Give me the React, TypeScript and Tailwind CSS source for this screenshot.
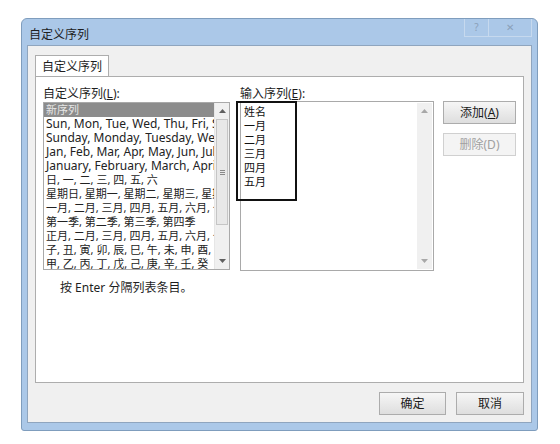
import React from "react";

const FONT = {
  fontFamily: '"Noto Sans", "Noto Sans CJK SC", sans-serif',
};

const leftItems = [
  "Sun, Mon, Tue, Wed, Thu, Fri, Sat",
  "Sunday, Monday, Tuesday, Wednesday, Thursday, Friday, Saturday",
  "Jan, Feb, Mar, Apr, May, Jun, Jul, Aug, Sep, Oct, Nov, Dec",
  "January, February, March, April, May, June, July, August",
  "日, 一, 二, 三, 四, 五, 六",
  "星期日, 星期一, 星期二, 星期三, 星期四, 星期五, 星期六",
  "一月, 二月, 三月, 四月, 五月, 六月, 七月, 八月, 九月",
  "第一季, 第二季, 第三季, 第四季",
  "正月, 二月, 三月, 四月, 五月, 六月, 七月, 八月, 九月",
  "子, 丑, 寅, 卯, 辰, 巳, 午, 未, 申, 酉, 戌, 亥",
  "甲, 乙, 丙, 丁, 戊, 己, 庚, 辛, 壬, 癸",
];

const rightItems = ["姓名", "一月", "二月", "三月", "四月", "五月"];

const isCjk = (t: string) => /[\u4e00-\u9fff]/.test(t);

const ArrowUp = ({ color = "#606060" }: { color?: string }) => (
  <svg width="7" height="4" viewBox="0 0 7 4">
    <path d="M0 4 L3.5 0 L7 4 Z" fill={color} />
  </svg>
);

const ArrowDown = ({ color = "#606060" }: { color?: string }) => (
  <svg width="7" height="4" viewBox="0 0 7 4">
    <path d="M0 0 L3.5 4 L7 0 Z" fill={color} />
  </svg>
);

const Button: React.FC<{ children: React.ReactNode; disabled?: boolean; className?: string }> = ({
  children,
  disabled,
  className = "",
}) => (
  <div
    className={`flex items-center justify-center h-[23px] text-[12px] border ${
      disabled
        ? "border-[#d0d0d0] bg-[#f4f4f4] text-[#a0a0a0]"
        : "border-[#acacac] bg-gradient-to-b from-[#f6f6f6] to-[#dedede] text-[#1a1a1a]"
    } ${className}`}
  >
    {children}
  </div>
);

export default function App() {
  return (
    <div className="w-[560px] h-[444px] bg-white pt-[18px] pl-[21px]" style={FONT}>
      <div className="w-[517px] h-[413px] flex flex-col rounded-t-[6px] rounded-b-[3px] border border-[#7f9dbd] bg-[#abc8e8] px-[5px] pb-[7px]">
        {/* title bar */}
        <div className="h-[26px] flex items-start justify-between">
          <div className="pt-[7px] pl-[2px] text-[12px] text-[#1e1e1e]">自定义序列</div>
          <div className="flex">
            <div className="w-[25px] h-[18px] border-x border-b border-[#c6d9ee] flex items-center justify-center text-[10px] text-[#8aa0b8]">
              ?
            </div>
            <div className="w-[43px] h-[18px] border-r border-b border-[#c6d9ee] flex items-center justify-center text-[10px] text-[#8aa0b8]">
              ✕
            </div>
          </div>
        </div>

        {/* client */}
        <div className="flex-1 flex flex-col bg-[#f0f0f0] border border-[#8fa5be] px-[7px] pt-[9px]">
          {/* tab */}
          <div className="flex">
            <div className="w-[74px] h-[22px] bg-white border border-b-0 border-[#adadad] flex items-center justify-center text-[12px] text-[#1e1e1e] -mb-px relative">
              自定义序列
            </div>
          </div>
          <div className="h-[307px] bg-white border border-[#adadad] relative">
            <div className="flex pl-[7px] pt-[10px]">
              {/* left column */}
              <div className="flex flex-col w-[187px]">
                <div className="text-[12px] text-[#1e1e1e] leading-[14px] h-[15px]">
                  自定义序列(<span className="underline">L</span>):
                </div>
                <div className="h-[168px] border border-[#a9a9a9] flex overflow-hidden">
                  <div className="flex-1 min-w-0 flex flex-col overflow-hidden">
                    <div className="h-[14px] leading-[14px] text-[11px] bg-[#8c8c8c] text-[#e6e6e6] pl-[2px] whitespace-nowrap shrink-0">
                      新序列
                    </div>
                    {leftItems.map((t) => (
                      <div
                        key={t}
                        className={`h-[14px] leading-[14px] ${
                          isCjk(t) ? "text-[11px]" : "text-[12px]"
                        } text-[#222] pl-[2px] whitespace-nowrap shrink-0`}
                      >
                        {t}
                      </div>
                    ))}
                  </div>
                  <div className="w-[15px] flex flex-col bg-[#f0f0f0] border-l border-[#e6e6e6]">
                    <div className="h-[16px] flex items-center justify-center">
                      <ArrowUp />
                    </div>
                    <div className="h-[106px] mx-[1px] bg-[#e8e8e8] border border-[#c5c5c5] flex flex-col items-center justify-center gap-[1px]">
                      <div className="w-[5px] h-px bg-[#8a8a8a]" />
                      <div className="w-[5px] h-px bg-[#8a8a8a]" />
                      <div className="w-[5px] h-px bg-[#8a8a8a]" />
                    </div>
                    <div className="flex-1" />
                    <div className="h-[16px] flex items-center justify-center">
                      <ArrowDown />
                    </div>
                  </div>
                </div>
              </div>

              {/* right column */}
              <div className="flex flex-col w-[194px] ml-[10px]">
                <div className="text-[12px] text-[#1e1e1e] leading-[14px] h-[14px]">
                  输入序列(<span className="underline">E</span>):
                </div>
                <div className="h-[170px] border border-[#a9a9a9] flex relative">
                  <div className="flex-1 flex flex-col pt-[3px] pl-[3px]">
                    {rightItems.map((t) => (
                      <div key={t} className="h-[14px] leading-[14px] text-[11px] text-[#111]">
                        {t}
                      </div>
                    ))}
                  </div>
                  <div className="w-[15px] my-[1px] mr-[1px] flex flex-col justify-between bg-[#f0f0f0]">
                    <div className="h-[16px] flex items-center justify-center">
                      <ArrowUp color="#a8a8a8" />
                    </div>
                    <div className="h-[16px] flex items-center justify-center">
                      <ArrowDown color="#a8a8a8" />
                    </div>
                  </div>
                  {/* annotation frame */}
                  <div className="absolute left-[-5px] top-[-1px] w-[61px] h-[100px] border-2 border-[#111]" />
                </div>
              </div>

              {/* buttons */}
              <div className="flex flex-col gap-[9px] ml-[9px] pt-[14px]">
                <Button className="w-[73px]">
                  添加(<span className="underline">A</span>)
                </Button>
                <Button className="w-[73px]" disabled>
                  删除(D)
                </Button>
              </div>
            </div>

            <div className="pl-[24px] pt-[8px] text-[12px] text-[#1e1e1e]">按 Enter 分隔列表条目。</div>
          </div>

          {/* bottom buttons */}
          <div className="flex justify-end gap-[10px] pt-[9px]">
            <Button className="w-[67px]">确定</Button>
            <Button className="w-[68px]">取消</Button>
          </div>
        </div>
      </div>
    </div>
  );
}
